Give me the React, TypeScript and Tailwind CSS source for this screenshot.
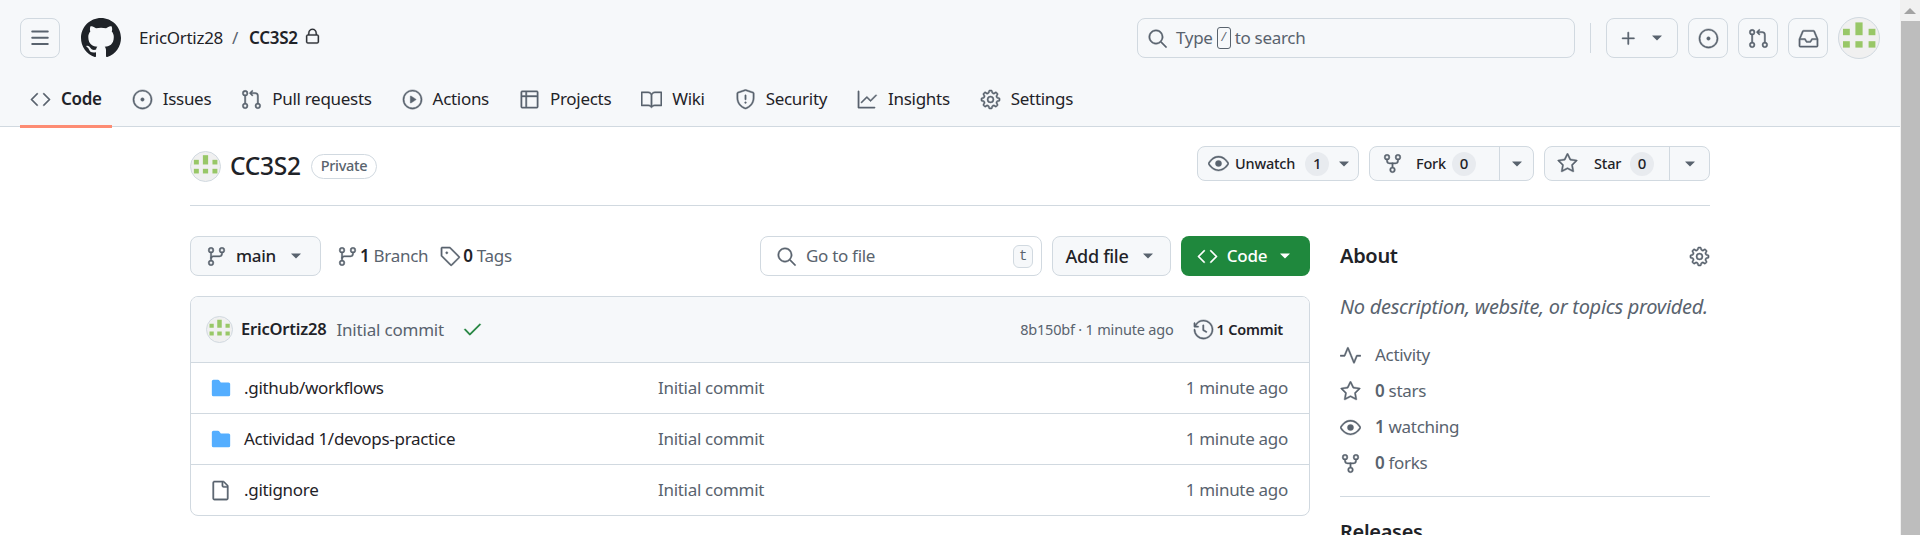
import { ReactNode } from 'react';
import {
  GoBook, GoCheck, GoCode, GoEye, GoFile, GoFileDirectoryFill, GoGear, GoGitBranch, GoGitPullRequest, GoGraph,
  GoHistory, GoInbox, GoIssueOpened, GoLock, GoPlay, GoPlus, GoPulse, GoRepoForked, GoSearch,
  GoShield, GoStar, GoTable, GoTag, GoTriangleDown,
} from 'react-icons/go';

// the package ships the thin 24px octicons, a bit of stroke brings them to the reference weight
const ico = { size: 21, strokeWidth: 0.5 };

function Identicon({ className = '' }: { className?: string }) {
  return (
    <svg viewBox="0 0 100 100" className={`shrink-0 rounded-full border border-[#d1d9e0] bg-[#f0f0f0] ${className}`}>
      <g fill="#98c767">
        <rect x="10" y="27" width="17" height="16" />
        <rect x="41" y="11" width="18" height="32" />
        <rect x="74" y="27" width="17" height="16" />
        <rect x="10" y="58" width="17" height="16" />
        <rect x="41" y="58" width="18" height="16" />
        <rect x="74" y="58" width="17" height="16" />
      </g>
    </svg>
  );
}

function GithubMark() {
  return (
    <svg viewBox="0 0 16 16" fill="currentColor" className="ml-[21px] h-10 w-10 shrink-0 text-[#1f2328]">
      <path d="M8 0c4.42 0 8 3.58 8 8a8.013 8.013 0 0 1-5.45 7.59c-.4.08-.55-.17-.55-.38 0-.27.01-1.13.01-2.2 0-.75-.25-1.23-.54-1.48 1.78-.2 3.65-.88 3.65-3.95 0-.88-.31-1.59-.82-2.15.08-.2.36-1.02-.08-2.12 0 0-.67-.22-2.2.82-.64-.18-1.32-.27-2-.27-.68 0-1.36.09-2 .27-1.53-1.03-2.2-.82-2.2-.82-.44 1.1-.16 1.92-.08 2.12-.51.56-.82 1.28-.82 2.15 0 3.06 1.86 3.75 3.64 3.95-.23.2-.44.55-.51 1.07-.46.21-1.61.55-2.33-.66-.15-.24-.6-.83-1.23-.82-.67.01-.27.38.01.53.34.19.73.9.82 1.13.16.45.68 1.31 2.69.94 0 .67.01 1.3.01 1.49 0 .21-.15.45-.55.38A7.995 7.995 0 0 1 0 8c0-4.42 3.58-8 8-8Z" />
    </svg>
  );
}

function ThreeBars() {
  return (
    <svg viewBox="0 0 16 16" fill="currentColor" className="h-5 w-5">
      <path d="M1 2.75A.75.75 0 0 1 1.75 2h12.5a.75.75 0 0 1 0 1.5H1.75A.75.75 0 0 1 1 2.75Zm0 5A.75.75 0 0 1 1.75 7h12.5a.75.75 0 0 1 0 1.5H1.75A.75.75 0 0 1 1 7.75ZM1.75 12h12.5a.75.75 0 0 1 0 1.5H1.75a.75.75 0 0 1 0-1.5Z" />
    </svg>
  );
}

function IconButton({ children }: { children: ReactNode }) {
  return (
    <div className="flex h-10 w-10 items-center justify-center rounded-lg border border-[#d1d9e0] text-[#59636e]">
      {children}
    </div>
  );
}

function Tab({ icon, label, active }: { icon: ReactNode; label: string; active?: boolean }) {
  return (
    <div className={`flex h-full items-center gap-[10px] border-b-[3px] px-[10px] pt-[1px] ${active ? 'border-[#fd8c73] font-semibold' : 'border-transparent'}`}>
      <span className="text-[#59636e]">{icon}</span>
      <span>{label}</span>
    </div>
  );
}

function Counter({ children }: { children: ReactNode }) {
  return <span className="flex h-6 min-w-6 items-center justify-center rounded-full bg-[#e8ebef] px-[7px] text-[15px] font-medium">{children}</span>;
}

function RepoAction({ icon, label, count, leftClass, labelClass }: { icon: ReactNode; label: string; count: string; leftClass: string; labelClass: string }) {
  return (
    <div className="flex h-[35px] items-center rounded-lg border border-[#d1d9e0] bg-[#f6f8fa] text-[14.5px] font-medium tracking-[-0.2px]">
      <div className={`flex h-full items-center border-r border-[#d1d9e0] pl-[12px] ${leftClass}`}>
        <span className="text-[#59636e]">{icon}</span>
        <span className={labelClass}>{label}</span>
        <Counter>{count}</Counter>
      </div>
      <div className="flex h-full flex-1 items-center justify-center text-[#59636e]">
        <GoTriangleDown size={18} />
      </div>
    </div>
  );
}

function FileRow({ name, icon }: { name: string; icon: ReactNode }) {
  return (
    <div className="flex h-[51px] items-center border-t border-[#d1d9e0] pl-[19px] pr-[21px]">
      <span className="w-[34px]">{icon}</span>
      <span className="w-[414px]">{name}</span>
      <span className="flex-1 text-[#59636e]">Initial commit</span>
      <span className="text-[#59636e]">1 minute ago</span>
    </div>
  );
}

function StatRow({ icon, children }: { icon: ReactNode; children: ReactNode }) {
  return (
    <div className="flex h-[36px] items-center gap-[14px] text-[#59636e]">
      {icon}
      <span>{children}</span>
    </div>
  );
}

export default function App() {
  return (
    <div className="flex h-[535px] overflow-hidden bg-white text-[17px] tracking-[-0.3px] text-[#1f2328] [font-family:'Noto_Sans',sans-serif]">
      <div className="w-[1900px] shrink-0">
        <header className="h-[127px] border-b border-[#d1d9e0] bg-[#f6f8fa]">
          <div className="flex items-center pl-[20px] pr-[20px] pt-[17px]">
            <IconButton><ThreeBars /></IconButton>
            <GithubMark />
            <span className="ml-[18px]">EricOrtiz28</span>
            <span className="ml-[9px] text-[#59636e]">/</span>
            <span className="ml-[11px] font-semibold">CC3S2</span>
            <GoLock size={17} strokeWidth={0.5} className="ml-[6px] mb-1" />
            <div className="ml-auto flex h-10 w-[438px] items-center gap-[8px] rounded-lg border border-[#d1d9e0] px-[9px] text-[#59636e]">
              <GoSearch {...ico} />
              <span className="flex items-center gap-1">Type <kbd className="flex h-[22px] w-[14px] items-center justify-center rounded-[3px] border border-[#59636e] text-[12px]">/</kbd> to search</span>
            </div>
            <div className="ml-[15px] mr-[15px] h-[30px] w-px bg-[#d1d9e0]" />
            <div className="flex h-10 w-[72px] items-center justify-center gap-[9px] rounded-lg border border-[#d1d9e0] text-[#59636e]">
              <GoPlus {...ico} />
              <GoTriangleDown size={18} />
            </div>
            <div className="ml-[10px] flex items-center gap-[10px]">
              <IconButton><GoIssueOpened {...ico} /></IconButton>
              <IconButton><GoGitPullRequest {...ico} /></IconButton>
              <IconButton><GoInbox {...ico} /></IconButton>
            </div>
            <Identicon className="ml-[10px] h-[42px] w-[42px]" />
          </div>
          <nav className="mt-[13px] flex h-[56px] gap-[10px] pl-[20px]">
            <Tab active icon={<GoCode {...ico} />} label="Code" />
            <Tab icon={<GoIssueOpened {...ico} />} label="Issues" />
            <Tab icon={<GoGitPullRequest {...ico} />} label="Pull requests" />
            <Tab icon={<GoPlay {...ico} />} label="Actions" />
            <Tab icon={<GoTable {...ico} />} label="Projects" />
            <Tab icon={<GoBook {...ico} />} label="Wiki" />
            <Tab icon={<GoShield {...ico} />} label="Security" />
            <Tab icon={<GoGraph {...ico} />} label="Insights" />
            <Tab icon={<GoGear {...ico} />} label="Settings" />
          </nav>
        </header>

        <main className="px-[190px]">
          <div className="flex h-[79px] items-center justify-between border-b border-[#d1d9e0] pb-[5px]">
            <div className="flex items-center pt-[5px]">
              <Identicon className="h-[31px] w-[31px]" />
              <span className="ml-[9px] text-[24.5px] font-medium">CC3S2</span>
              <span className="ml-[10px] flex h-[25px] items-center rounded-full border border-[#d1d9e0] px-[9px] text-[14.5px] font-medium text-[#59636e]">Private</span>
            </div>
            <div className="flex gap-[10px]">
              <div className="flex h-[35px] w-[162px] items-center gap-[6px] rounded-lg border border-[#d1d9e0] bg-[#f6f8fa] pl-[10px] text-[14.5px] font-medium tracking-[-0.2px]">
                <GoEye {...ico} className="text-[#59636e]" />
                <span className="mr-[4px]">Unwatch</span>
                <Counter>1</Counter>
                <GoTriangleDown size={18} className="text-[#59636e]" />
              </div>
              <div className="w-[165px]"><RepoAction icon={<GoRepoForked {...ico} />} label="Fork" count="0" leftClass="w-[130px]" labelClass="ml-[13px] w-[36px]" /></div>
              <div className="w-[166px]"><RepoAction icon={<GoStar {...ico} />} label="Star" count="0" leftClass="w-[125px]" labelClass="ml-[16px] w-[36px]" /></div>
            </div>
          </div>

          <div className="mt-[30px] flex gap-[30px]">
            <div className="w-[1120px] shrink-0">
              <div className="flex h-10 items-center">
                <div className="flex h-10 w-[131px] items-center rounded-lg border border-[#d1d9e0] bg-[#f6f8fa] pl-[15px] font-medium">
                  <GoGitBranch {...ico} className="text-[#59636e]" />
                  <span className="ml-[9px]">main</span>
                  <GoTriangleDown size={18} className="ml-[11px] text-[#59636e]" />
                </div>
                <GoGitBranch {...ico} className="ml-[16px] text-[#59636e]" />
                <span className="ml-[2px] text-[#59636e]"><b className="font-semibold text-[#1f2328]">1</b> Branch</span>
                <GoTag {...ico} className="ml-[12px] text-[#59636e]" />
                <span className="ml-[2px] text-[#59636e]"><b className="font-semibold text-[#1f2328]">0</b> Tags</span>
                <div className="ml-auto flex h-10 w-[282px] items-center rounded-lg border border-[#d1d9e0] pl-[15px] pr-[8px] text-[#59636e]">
                  <GoSearch {...ico} />
                  <span className="ml-[9px] flex-1">Go to file</span>
                  <kbd className="flex h-[23px] w-[20px] items-center justify-center rounded-md border border-[#d1d9e0] bg-[#f6f8fa] font-mono text-[14px]">t</kbd>
                </div>
                <div className="ml-[10px] flex h-10 w-[119px] items-center justify-center gap-[11px] rounded-lg border border-[#d1d9e0] bg-[#f6f8fa] text-[18px] font-medium">
                  Add file
                  <GoTriangleDown size={18} className="text-[#59636e]" />
                </div>
                <div className="ml-[10px] flex h-10 w-[129px] items-center justify-center gap-[9px] rounded-lg bg-[#1f883d] font-medium text-white">
                  <GoCode {...ico} />
                  Code
                  <GoTriangleDown size={18} />
                </div>
              </div>

              <div className="mt-[20px] overflow-hidden rounded-lg border border-[#d1d9e0]">
                <div className="flex h-[65px] items-center bg-[#f6f8fa] pl-[15px] pr-[26px] text-[14.5px] tracking-[-0.2px]">
                  <Identicon className="h-[27px] w-[27px]" />
                  <span className="ml-[8px] text-[16.5px] font-semibold">EricOrtiz28</span>
                  <span className="ml-[10px] text-[17px] text-[#59636e]">Initial commit</span>
                  <GoCheck {...ico} className="ml-[18px] text-[#1a7f37]" />
                  <span className="ml-auto text-[#59636e]">8b150bf · 1 minute ago</span>
                  <GoHistory {...ico} className="ml-[19px] text-[#59636e]" />
                  <span className="ml-[3px] font-semibold">1 Commit</span>
                </div>
                <FileRow name=".github/workflows" icon={<GoFileDirectoryFill size={22} className="text-[#54aeff]" />} />
                <FileRow name="Actividad 1/devops-practice" icon={<GoFileDirectoryFill size={22} className="text-[#54aeff]" />} />
                <FileRow name=".gitignore" icon={<GoFile {...ico} className="text-[#59636e]" />} />
              </div>
            </div>

            <aside className="flex-1">
              <div className="flex h-10 items-center justify-between">
                <span className="text-[20px] font-semibold">About</span>
                <GoGear {...ico} className="text-[#59636e]" />
              </div>
              <p className="mt-[18px] whitespace-nowrap text-[20px] leading-[26px] italic text-[#59636e]">No description, website, or topics provided.</p>
              <div className="mt-[17px]">
                <StatRow icon={<GoPulse {...ico} />}>Activity</StatRow>
                <StatRow icon={<GoStar {...ico} />}><b className="font-semibold">0</b> stars</StatRow>
                <StatRow icon={<GoEye {...ico} />}><b className="font-semibold">1</b> watching</StatRow>
                <StatRow icon={<GoRepoForked {...ico} />}><b className="font-semibold">0</b> forks</StatRow>
              </div>
              <div className="mt-[15px] border-t border-[#d1d9e0] pt-[20px] text-[20px] font-semibold">Releases</div>
            </aside>
          </div>
        </main>
      </div>

      <div className="flex w-5 flex-col bg-[#f1f1f1]">
        <div className="flex h-[21px] items-center justify-center">
          <div className="h-0 w-0 border-x-[6px] border-b-[6px] border-x-transparent border-b-[#a3a3a3]" />
        </div>
        <div className="ml-[1px] flex-1 bg-[#bdbdbd]" />
      </div>
    </div>
  );
}
